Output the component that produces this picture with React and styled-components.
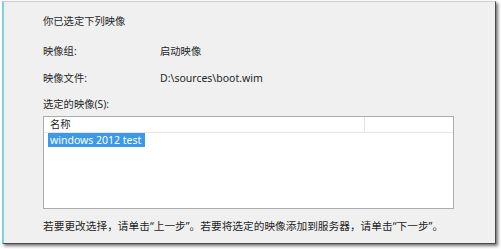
import React from 'react'
import styled, { createGlobalStyle } from 'styled-components'

const GlobalStyle = createGlobalStyle`
  html, body {
    margin: 0;
    padding: 0;
    background: #ffffff;
  }
  body {
    font-family: "Noto Sans", "Noto Sans CJK SC", sans-serif;
    -webkit-font-smoothing: antialiased;
  }
`

const Stage = styled.div`
  width: 501px;
  height: 249px;
  padding: 1px 0 0 2px;
  box-sizing: border-box;
`

const Panel = styled.div`
  width: 494px;
  height: 243px;
  box-sizing: border-box;
  background: #f0f0f0;
  border-left: 2px solid #7fcfdc;
  border-top: 1px solid #cfcfcf;
  border-right: 1px solid #4a4a4a;
  border-bottom: 1px solid #4a4a4a;
  box-shadow: 2px 2px 3px rgba(0, 0, 0, 0.55);
  padding: 12px 0 0 39px;
  color: #262626;
  font-size: 10.3px;
  line-height: 14px;
`

const Title = styled.div`
  height: 14px;
`

const Details = styled.div`
  display: grid;
  grid-template-columns: 117px 1fr;
  row-gap: 13px;
  margin-top: 16px;
`

const Value = styled.div`
  font-size: ${props => (props.latin ? '10.5px' : '10.3px')};
`

const ListLabel = styled.div`
  margin-top: 12px;
`

const ListBox = styled.div`
  width: 411px;
  height: 93px;
  margin-top: 5px;
  box-sizing: border-box;
  background: #ffffff;
  border: 1px solid #acacac;
`

const Header = styled.div`
  display: flex;
  height: 15px;
  border-bottom: 1px solid #e6e6e6;
`

const HeaderCell = styled.div`
  width: ${props => props.width}px;
  padding-left: ${props => props.pad || 0}px;
  box-sizing: border-box;
  border-right: ${props => (props.divider ? '1px solid #e6e6e6' : 'none')};
  line-height: 15px;
`

const Row = styled.div`
  display: inline-block;
  margin-left: 4px;
  padding: 0 4px 0 2px;
  height: 14px;
  line-height: 14px;
  background: ${props => (props.selected ? '#3c98e8' : 'transparent')};
  color: ${props => (props.selected ? '#ffffff' : '#262626')};
  font-size: 10.5px;
`

const Hint = styled.div`
  margin-top: 10px;
  font-size: 10.7px;
  white-space: nowrap;
`

export default function App() {
  return (
    <>
      <GlobalStyle />
      <Stage>
        <Panel>
          <Title>你已选定下列映像</Title>
          <Details>
            <div>映像组:</div>
            <Value>启动映像</Value>
            <div>映像文件:</div>
            <Value latin>D:\sources\boot.wim</Value>
          </Details>
          <ListLabel>选定的映像(S):</ListLabel>
          <ListBox>
            <Header>
              <HeaderCell width={321} pad={6} divider>
                名称
              </HeaderCell>
              <HeaderCell width={88} />
            </Header>
            <Row selected>windows 2012 test</Row>
          </ListBox>
          <Hint>
            若要更改选择，请单击“上一步”。若要将选定的映像添加到服务器，请单击“下一步”。
          </Hint>
        </Panel>
      </Stage>
    </>
  )
}
